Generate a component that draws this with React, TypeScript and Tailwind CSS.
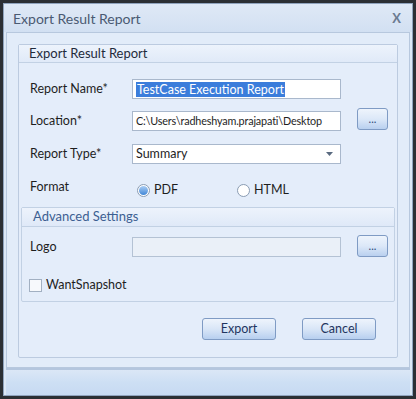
import React from 'react';

const font = { fontFamily: 'Lato, "Noto Sans", sans-serif' };

const BrowseButton = () => (
  <button className="w-[31px] h-[22px] rounded-[3px] border border-[#7f9bc4] bg-gradient-to-b from-[#eef4fc] via-[#dce8f8] to-[#b9d0ef] flex items-center justify-center text-[11px] text-[#2e4a78] leading-none pb-[2px]">
    ...
  </button>
);

const Radio = ({ checked, label }: { checked?: boolean; label: string }) => (
  <div className="flex items-center gap-[4px]">
    <span className="w-[13px] h-[13px] rounded-full border border-[#8a9cb3] bg-white flex items-center justify-center">
      {checked && <span className="w-[9px] h-[9px] rounded-full bg-gradient-to-b from-[#a9cdf4] to-[#3f86d6]" />}
    </span>
    <span className="text-[12.5px] text-[#1e1e1e]">{label}</span>
  </div>
);

export default function App() {
  return (
    <div className="w-[416px] h-[399px] bg-[#2b2f34] p-[3px]" style={font}>
      <div className="w-full h-full border border-[#8fa3bd] bg-[#dce8f6] flex flex-col">
        {/* Title bar */}
        <div className="h-[28px] flex items-center justify-between pl-[9px] pr-[11px] bg-gradient-to-b from-[#dfe9f6] to-[#d2e0f2]">
          <span className="text-[14px] text-[#4a5a72]">Export Result Report</span>
          <span className="text-[13px] font-bold text-[#6b7a90] leading-none">X</span>
        </div>

        {/* Body */}
        <div className="flex-1 mx-[2px] border border-[#b7c8de] bg-[#e2ecf9] pt-[11px] px-[11px]">
          <div className="h-[314px] border border-[#bccbe0] rounded-[2px] bg-[#e4edfa] flex flex-col">
            <div className="h-[18px] flex items-center pl-[10px] border-b border-[#c2d1e4] bg-gradient-to-b from-[#edf3fc] to-[#e0eaf8]">
              <span className="text-[13px] text-[#1f2b3c]">Export Result Report</span>
            </div>

            <div className="pl-[11px] pt-[16px] flex flex-col">
              <div className="flex items-center h-[20px]">
                <span className="w-[102px] text-[12.5px] text-[#1e1e1e]">Report Name*</span>
                <div className="w-[209px] h-[20px] border border-[#a9b8cc] bg-white flex items-center px-[3px]">
                  <span className="text-[12.5px] bg-[#3b7ddb] text-white leading-[15px] px-[1px]">TestCase Execution Report</span>
                </div>
              </div>

              <div className="flex items-center h-[20px] mt-[12px]">
                <span className="w-[102px] text-[12.5px] text-[#1e1e1e]">Location*</span>
                <div className="w-[209px] h-[20px] border border-[#a9b8cc] bg-white flex items-center px-[3px] overflow-hidden whitespace-nowrap">
                  <span className="text-[10.8px] tracking-[-0.15px] text-[#1e1e1e]">C:\Users\radheshyam.prajapati\Desktop</span>
                </div>
                <div className="ml-[16px] -mt-[4px]">
                  <BrowseButton />
                </div>
              </div>

              <div className="flex items-center h-[20px] mt-[13px]">
                <span className="w-[102px] text-[12.5px] text-[#1e1e1e]">Report Type*</span>
                <div className="w-[209px] h-[20px] border border-[#a9b8cc] bg-white flex items-center justify-between px-[3px]">
                  <span className="text-[12.5px] text-[#1e1e1e]">Summary</span>
                  <svg width="7" height="4" viewBox="0 0 7 4" className="mr-[4px]">
                    <path d="M0 0 L7 0 L3.5 4 Z" fill="#5a6a80" />
                  </svg>
                </div>
              </div>

              <div className="flex items-start h-[22px] mt-[15px]">
                <span className="w-[102px] text-[12.5px] text-[#1e1e1e] -mt-[1px]">Format</span>
                <div className="w-[105px] pl-[5px] mt-[2px]">
                  <Radio checked label="PDF" />
                </div>
                <div className="mt-[2px]">
                  <Radio label="HTML" />
                </div>
              </div>
            </div>

            {/* Advanced settings */}
            <div className="mx-[2px] mt-[6px] h-[95px] border border-[#c2d1e4] rounded-[2px] flex flex-col">
              <div className="h-[19px] flex items-center pl-[11px] border-b border-[#c2d1e4] bg-gradient-to-b from-[#edf3fc] to-[#dfe9f8]">
                <span className="text-[13px] text-[#3d5f92]">Advanced Settings</span>
              </div>
              <div className="flex items-center h-[20px] mt-[10px] pl-[8px]">
                <span className="w-[102px] text-[12.5px] text-[#1e1e1e]">Logo</span>
                <div className="w-[209px] h-[20px] border border-[#b4c2d4] bg-[#eaf0f8]" />
                <div className="ml-[16px] -mt-[2px]">
                  <BrowseButton />
                </div>
              </div>
              <div className="flex items-center mt-[19px] pl-[7px] gap-[4px]">
                <span className="w-[13px] h-[13px] border border-[#a2b0c2] bg-[#f7f9fc]" />
                <span className="text-[12.5px] text-[#1e1e1e]">WantSnapshot</span>
              </div>
            </div>

            <div className="flex justify-end gap-[26px] pr-[21px] mt-[16px]">
              {['Export', 'Cancel'].map((b) => (
                <button
                  key={b}
                  className="w-[74px] h-[22px] rounded-[3px] border border-[#7f9bc4] bg-gradient-to-b from-[#eef4fc] via-[#d9e6f7] to-[#b7cfef] text-[12.5px] text-[#1f3560] flex items-center justify-center"
                >
                  {b}
                </button>
              ))}
            </div>
          </div>
        </div>

        {/* Status bar */}
        <div className="h-[27px] mx-[2px] border-t-[2px] border-[#b4c6de] bg-gradient-to-b from-[#dbe7f6] via-[#cddff4] to-[#c7daf2]" />
      </div>
    </div>
  );
}
